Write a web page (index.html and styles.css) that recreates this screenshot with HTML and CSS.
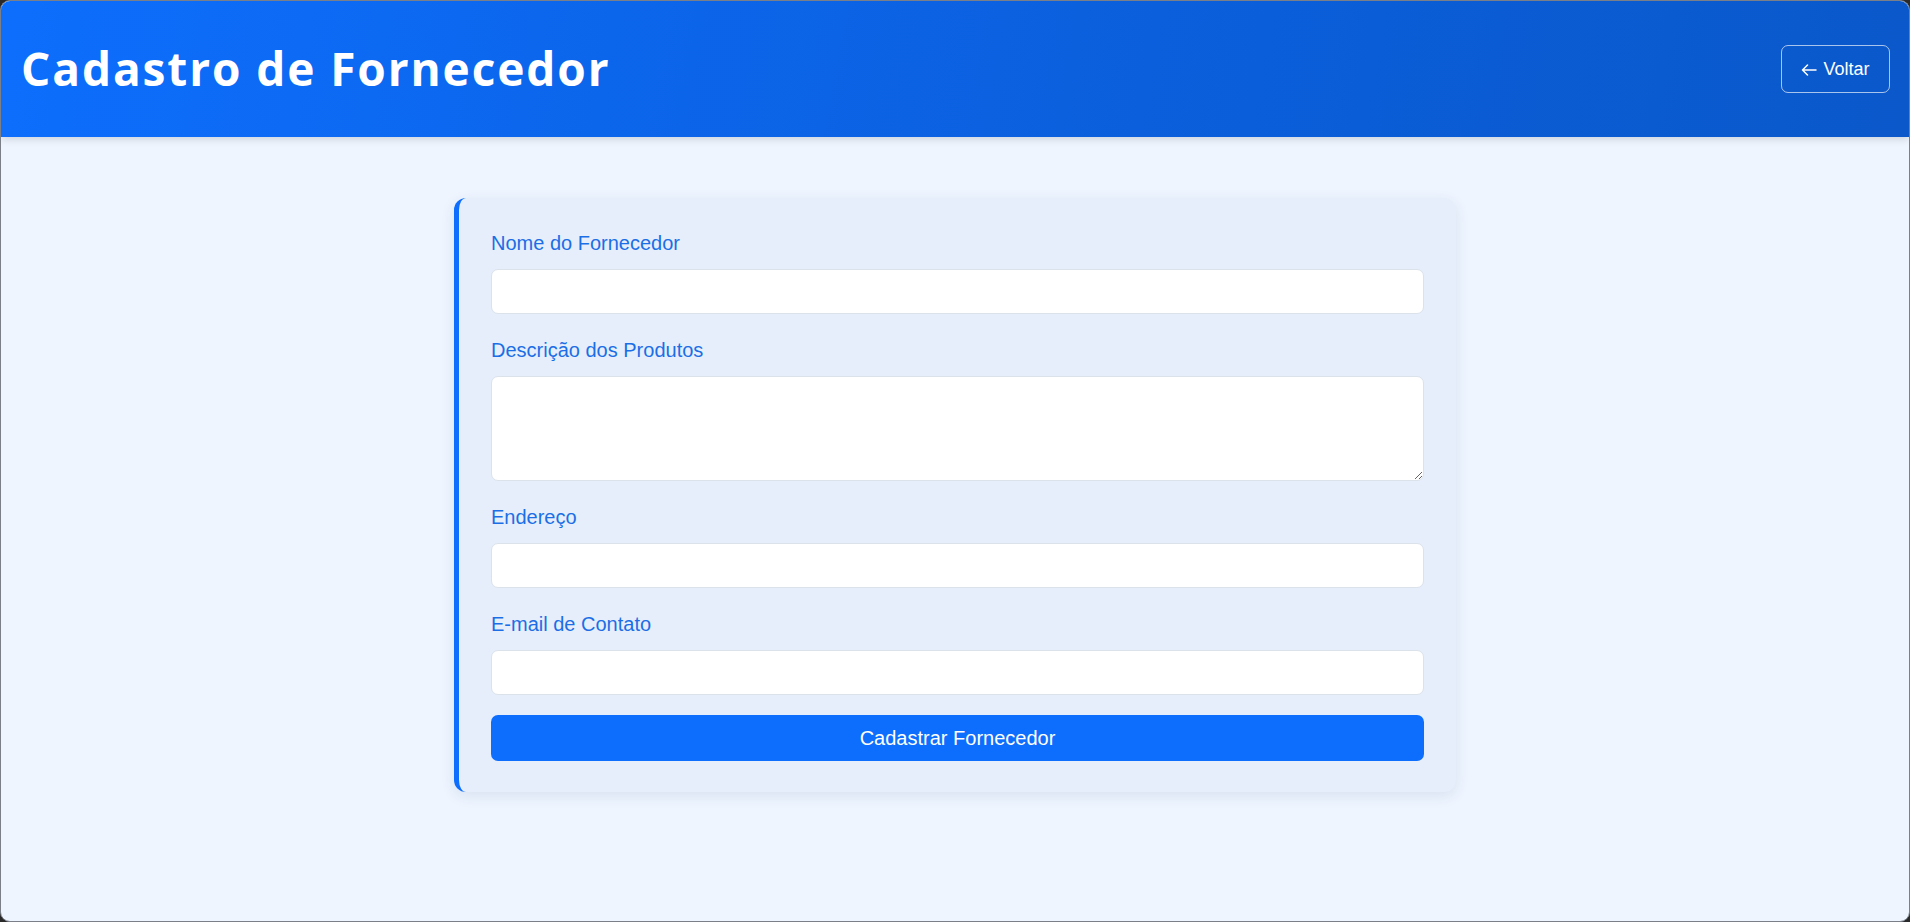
FILE: index.html
```html
<!DOCTYPE html>
<html lang="pt-BR">
<head>
<meta charset="utf-8">
<title>Cadastro de Fornecedor</title>
<link rel="stylesheet" href="styles.css">
</head>
<body>
<div class="app">
  <header class="topbar">
    <h1 class="title">Cadastro de Fornecedor</h1>
    <a class="back-btn" href="#"><svg class="back-icon" width="16" height="12" viewBox="0 0 16 12" aria-hidden="true"><path d="M15 6H1.5M6.5 1L1.5 6l5 5" fill="none" stroke="#ffffff" stroke-width="1.5" stroke-linecap="round" stroke-linejoin="round"/></svg>Voltar</a>
  </header>
  <main class="main">
    <form class="card">
      <div class="field">
        <label class="label" for="nome">Nome do Fornecedor</label>
        <input class="input" id="nome" type="text">
      </div>
      <div class="field">
        <label class="label" for="desc">Descrição dos Produtos</label>
        <textarea class="input textarea" id="desc"></textarea>
      </div>
      <div class="field">
        <label class="label" for="end">Endereço</label>
        <input class="input" id="end" type="text">
      </div>
      <div class="field last">
        <label class="label" for="email">E-mail de Contato</label>
        <input class="input" id="email" type="email">
      </div>
      <button class="submit" type="button">Cadastrar Fornecedor</button>
    </form>
  </main>
</div>
</body>
</html>
```

FILE: styles.css
```css
html {
  background: #2a2a2a;
}
body {
  margin: 0;
  font-family: "Liberation Sans", Arial, sans-serif;
}
.app {
  height: 922px;
  box-sizing: border-box;
  border: 1px solid #7a7f88;
  border-radius: 10px;
  overflow: hidden;
  background: #eef5ff;
  display: flex;
  flex-direction: column;
}
.topbar {
  height: 136px;
  flex: none;
  box-sizing: border-box;
  padding: 0 19px 0 20px;
  display: flex;
  align-items: center;
  justify-content: space-between;
  background: linear-gradient(100deg, #0d6efd 0%, #0b5fdc 60%, #0a58ca 100%);
  box-shadow: 0 2px 8px rgba(0, 0, 0, 0.15);
  position: relative;
  z-index: 1;
}
.title {
  margin: 0;
  color: #ffffff;
  font-family: "Open Sans", "Noto Sans", sans-serif;
  font-weight: 700;
  font-size: 46px;
  line-height: 1.2;
  letter-spacing: 1.9px;
}
.back-btn {
  display: flex;
  align-items: center;
  justify-content: center;
  gap: 6px;
  width: 109px;
  height: 48px;
  box-sizing: border-box;
  border: 1px solid rgba(255, 255, 255, 0.65);
  border-radius: 7px;
  color: #ffffff;
  text-decoration: none;
  font-size: 18px;
}
.back-icon {
  flex: none;
  margin-top: 1px;
}
.main {
  flex: 1;
  display: flex;
  justify-content: center;
  align-items: flex-start;
  padding-top: 61px;
}
.card {
  width: 1002px;
  box-sizing: border-box;
  padding: 33px 32px 31px 32px;
  background: #e6eefb;
  border-left: 5px solid #0d6efd;
  border-radius: 12px;
  box-shadow: 0 4px 14px rgba(30, 60, 110, 0.10);
  display: flex;
  flex-direction: column;
}
.field {
  display: flex;
  flex-direction: column;
  margin-bottom: 24px;
}
.field.last {
  margin-bottom: 20px;
}
.label {
  font-size: 20px;
  line-height: 24px;
  color: #1b6ee6;
  margin-bottom: 14px;
}
.input {
  height: 45px;
  box-sizing: border-box;
  border: 1px solid #dbe2ea;
  border-radius: 7px;
  background: #ffffff;
  font-family: "Liberation Sans", Arial, sans-serif;
  font-size: 16px;
  padding: 8px 12px;
  margin: 0;
}
.textarea {
  height: 105px;
  resize: vertical;
}
.submit {
  height: 46px;
  border: none;
  border-radius: 7px;
  background: #0d6efd;
  color: #ffffff;
  font-family: "Liberation Sans", Arial, sans-serif;
  font-size: 20px;
  cursor: pointer;
}
```
